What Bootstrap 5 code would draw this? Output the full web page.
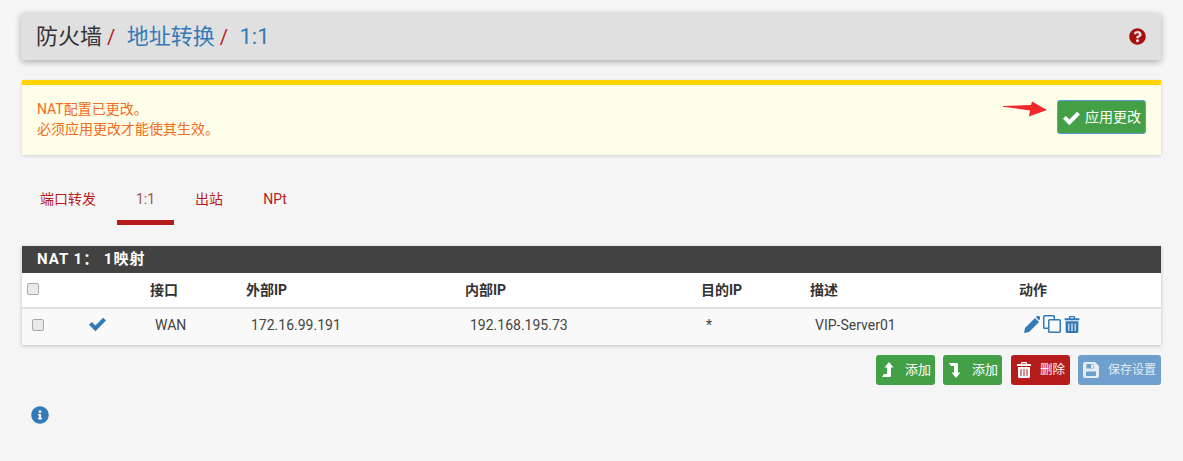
<!DOCTYPE html>
<html lang="zh">
<head>
<meta charset="utf-8">
<title>防火墙 / 地址转换 / 1:1</title>
<link href="https://cdn.jsdelivr.net/npm/bootstrap@5.3.0/dist/css/bootstrap.min.css" rel="stylesheet">
<style>
body{background:#f5f5f5;font-family:Roboto,"Noto Sans CJK SC",sans-serif;font-size:14px;color:#444;}
.pg-wrap{padding:13px 22px 0 21px;}
.pg-head{height:47px;background:#e0e0e0;border-radius:3px;box-shadow:0 2px 6px rgba(0,0,0,.3);padding:0 15px 0 15px;}
.pg-crumbs{font-size:22px;line-height:47px;color:#333;}
.pg-crumbs a{color:#337ab7;text-decoration:none;}
.pg-sep{color:#b71c1c;font-size:20px;margin:0 6px 0 5px;}
.pg-help{width:17px;height:17px;fill:#a90f0f;}
.pg-alert{margin:20px 0 0 1px;height:75px;background:#fffee8;border-top:5px solid #ffd200;box-shadow:0 1px 3px rgba(0,0,0,.16);padding:14px 15px 0 15px;color:#ef6c20;line-height:20px;font-size:14px;}
.pg-arrow{width:44px;height:16px;margin-right:10px;margin-top:2px;}
.pg-apply{height:34px;width:89px;background:#43a047;color:#fff;border:1px solid #5d9cce;border-radius:3px;font-size:14px;padding:0 0 0 5px;margin-top:1px;}
.pg-apply:hover{background:#43a047;color:#fff;}
.pg-apply svg{width:17px;height:17px;fill:#fff;margin-right:5px;}
.pg-tabs{margin-top:24px;height:67px;gap:0;}
.pg-tabs .nav-link{color:#b71c1c;font-size:14px;height:46px;padding:10px 0 0;text-align:center;border-bottom:5px solid transparent;border-radius:0;}
.pg-tabs .nav-link.active{color:#a5504a;border-bottom-color:#b71c1c;}
.pg-t1{width:56px;margin-left:19px;}
.pg-t2{width:57px;margin-left:21px;}
.pg-t3{width:28px;margin-left:21px;}
.pg-t4{width:24px;margin-left:40px;}
.pg-panel{background:#fff;box-shadow:0 1px 4px rgba(0,0,0,.22);margin-left:1px;}
.pg-ptitle{background:#424242;color:#fff;height:27px;line-height:27px;font-size:15px;font-weight:700;padding-left:15px;letter-spacing:1px;}
.pg-tbl{table-layout:fixed;width:100%;margin:0;font-size:14px;}
.pg-tbl th{height:35px;padding:1px 0 0 5px;font-weight:700;color:#333;border-bottom:2px solid #ddd;vertical-align:middle;background:#fff;box-shadow:none;}
.pg-tbl td{height:37px;padding:0 0 4px 10px;color:#444;vertical-align:middle;background:#f9f9f9;border:0;box-shadow:none;}
.pg-c1{width:48px}.pg-c2{width:75px}.pg-c3{width:96px}.pg-c4{width:219px}.pg-c5{width:236px}.pg-c6{width:109px}.pg-c7{width:209px}
.pg-tbl .form-check-input{width:12px;height:12px;margin:0;display:block;background-color:#e9e9e9;border:1px solid #aaa;border-radius:2px;}
.pg-tbl .pg-th0{margin-top:-3px;}
.pg-on{width:17px;height:17px;fill:#337ab7;margin:0 0 3px 9px;display:block;}
.pg-acts{gap:3px;margin-bottom:2px;}
.pg-act{width:16px;height:17px;fill:#337ab7;display:block;}
.pg-actc{width:18px;height:18px;}
.pg-btns{margin-top:10px;gap:8px;margin-left:1px;}
.pg-b{height:30px;border:0;border-radius:3px;color:#fff;font-size:13px;padding:0 4px 0 5px;}
.pg-b svg{width:16px;height:16px;fill:#fff;}
.pg-b1{width:59px;background:#43a047;}
.pg-b2{width:59px;background:#43a047;margin-right:1px;}
.pg-b3{width:59px;background:#b71c1c;font-size:12.5px;padding-right:5px;}
.pg-b4{width:83px;background:#6f9fcd;color:#e2edf6;font-size:12px;padding-right:5px;}
.pg-b4 svg{fill:#e2edf6;}
.pg-b:hover,.pg-b:disabled{color:#fff;opacity:1;}
.pg-b1:hover,.pg-b2:hover{background:#43a047;}
.pg-b3:hover{background:#b71c1c;}
.pg-b4:disabled{background:#6f9fcd;color:#e2edf6;border:0;}
.pg-info{width:18px;height:18px;fill:#337ab7;display:block;margin:21px 0 0 10px;}
</style>
</head>
<body>
<div class="pg-wrap">
  <div class="pg-head d-flex justify-content-between align-items-center">
    <div class="pg-crumbs">防火墙<span class="pg-sep">/</span> <a href="#">地址转换</a><span class="pg-sep">/</span> <a href="#">1:1</a></div>
    <svg class="pg-help" viewBox="0 0 512 512"><path d="M504 256c0 136.997-111.043 248-248 248S8 392.997 8 256C8 119.083 119.043 8 256 8s248 111.083 248 248zM262.655 90c-54.497 0-89.255 22.957-116.549 63.758-3.536 5.286-2.353 12.415 2.715 16.258l34.699 26.31c5.205 3.947 12.621 3.008 16.665-2.122 17.864-22.658 30.113-35.797 57.303-35.797 20.429 0 45.698 13.148 45.698 32.958 0 14.976-12.363 22.667-32.534 33.976C247.128 238.528 216 254.941 216 296v4c0 6.627 5.373 12 12 12h56c6.627 0 12-5.373 12-12v-1.333c0-28.462 83.186-29.647 83.186-106.667 0-58.002-60.165-102-116.531-102zM256 338c-25.365 0-46 20.635-46 46 0 25.364 20.635 46 46 46s46-20.636 46-46c0-25.365-20.635-46-46-46z"/></svg>
  </div>

  <div class="pg-alert d-flex justify-content-between">
    <div>NAT配置已更改。<br>必须应用更改才能使其生效。</div>
    <div class="d-flex align-items-start">
      <svg class="pg-arrow" viewBox="0 0 44 16"><polygon points="0,5 0,5.800 27,9.500 26,15.500 44,9 29,0.500 28,4" fill="#f0282d"/></svg>
      <button class="btn pg-apply d-flex align-items-center" type="button"><svg viewBox="0 0 16 16"><path d="M0 9.200l2.700-2.700L6 9.800 13.300 2.500 16 5.200 6 15.200z"/></svg>应用更改</button>
    </div>
  </div>

  <ul class="nav pg-tabs">
    <li class="nav-item"><a class="nav-link pg-t1" href="#">端口转发</a></li>
    <li class="nav-item"><a class="nav-link pg-t2 active" href="#">1:1</a></li>
    <li class="nav-item"><a class="nav-link pg-t3" href="#">出站</a></li>
    <li class="nav-item"><a class="nav-link pg-t4" href="#">NPt</a></li>
  </ul>

  <div class="pg-panel">
    <div class="pg-ptitle">NAT 1： 1映射</div>
    <table class="table pg-tbl">
      <colgroup><col class="pg-c1"><col class="pg-c2"><col class="pg-c3"><col class="pg-c4"><col class="pg-c5"><col class="pg-c6"><col class="pg-c7"><col></colgroup>
      <thead>
        <tr>
          <th><input class="form-check-input pg-th0" type="checkbox" aria-label="全选"></th>
          <th></th><th>接口</th><th>外部IP</th><th>内部IP</th><th>目的IP</th><th>描述</th><th>动作</th>
        </tr>
      </thead>
      <tbody>
        <tr>
          <td><input class="form-check-input" type="checkbox" aria-label="选择"></td>
          <td><svg class="pg-on" viewBox="0 0 16 16"><path d="M0 9.200l2.700-2.700L6 9.800 13.300 2.500 16 5.200 6 15.200z"/></svg></td>
          <td>WAN</td><td>172.16.99.191</td><td>192.168.195.73</td><td>*</td><td>VIP-Server01</td>
          <td>
            <div class="d-flex align-items-center pg-acts">
              <svg class="pg-act" viewBox="0 0 16 17"><path d="M0 17l1-5L11 2l4 4L5 16zM12 1l1-1q1-.4 2 0l1 1q.5 1 0 2l-1 1.500z"/></svg>
              <svg class="pg-act pg-actc" viewBox="0 0 18 18"><path d="M1.500 0h9A1.500 1.500 0 0 1 12 1.500V4h4.500A1.500 1.500 0 0 1 18 5.500v11a1.500 1.500 0 0 1-1.500 1.500h-10A1.500 1.500 0 0 1 5 16.500V14H1.500A1.500 1.500 0 0 1 0 12.500v-11A1.500 1.500 0 0 1 1.500 0zM1.500 1.500v11H5V5.500A1.500 1.500 0 0 1 6.500 4h4V1.500zM6.500 5.500v11h10v-11z" fill-rule="evenodd"/></svg>
              <svg class="pg-act" viewBox="0 0 14 16"><path d="M4 2V1q0-1 1-1h4q1 0 1 1v1h3.500a.5.500 0 0 1 .5.500V4H0V2.500A.5.500 0 0 1 .5 2zM5.200 2h3.600V1.200H5.200zM1 5h12v9.500a1.500 1.500 0 0 1-1.500 1.500h-9A1.500 1.500 0 0 1 1 14.500zM3.500 7v7h1V7zM6.500 7v7h1V7zM9.500 7v7h1V7z" fill-rule="evenodd"/></svg>
            </div>
          </td>
        </tr>
      </tbody>
    </table>
  </div>

  <div class="d-flex justify-content-end pg-btns">
    <button class="btn pg-b pg-b1 d-flex align-items-center justify-content-between" type="button"><svg viewBox="0 0 16 16"><path d="M8 0l4.500 5.500H10V14q0 1-1 1H1l2-3h3V5.500H3.500z"/></svg>添加</button>
    <button class="btn pg-b pg-b2 d-flex align-items-center justify-content-between" type="button"><svg viewBox="0 0 16 16"><path d="M1 1h8q1 0 1 1v8.500h2.500L8 16l-4.500-5.500H6V4H3z"/></svg>添加</button>
    <button class="btn pg-b pg-b3 d-flex align-items-center justify-content-between" type="button"><svg viewBox="0 0 14 16"><path d="M4 2V1q0-1 1-1h4q1 0 1 1v1h3.500a.5.500 0 0 1 .5.500V4H0V2.500A.5.500 0 0 1 .5 2zM5.200 2h3.600V1.200H5.200zM1 5h12v9.500a1.500 1.500 0 0 1-1.500 1.500h-9A1.500 1.500 0 0 1 1 14.500zM3.500 7v7h1V7zM6.500 7v7h1V7zM9.500 7v7h1V7z" fill-rule="evenodd"/></svg>删除</button>
    <button class="btn pg-b pg-b4 d-flex align-items-center justify-content-between" type="button" disabled><svg viewBox="0 0 16 16"><path d="M2 0h10l4 4v10a2 2 0 0 1-2 2H2a2 2 0 0 1-2-2V2a2 2 0 0 1 2-2zM3.500 2v4.500h7V2zM3 9.500V14h10V9.500zM8 2.500h2V6H8z" fill-rule="evenodd"/></svg>保存设置</button>
  </div>

  <svg class="pg-info" viewBox="0 0 512 512"><path d="M256 8C119.043 8 8 119.083 8 256c0 136.997 111.043 248 248 248s248-111.003 248-248C504 119.083 392.957 8 256 8zm0 110c23.196 0 42 18.804 42 42s-18.804 42-42 42-42-18.804-42-42 18.804-42 42-42zm56 254c0 6.627-5.373 12-12 12h-88c-6.627 0-12-5.373-12-12v-24c0-6.627 5.373-12 12-12h12v-64h-12c-6.627 0-12-5.373-12-12v-24c0-6.627 5.373-12 12-12h64c6.627 0 12 5.373 12 12v100h12c6.627 0 12 5.373 12 12v24z"/></svg>
</div>
<script src="https://cdn.jsdelivr.net/npm/bootstrap@5.3.0/dist/js/bootstrap.bundle.min.js"></script>
</body>
</html>
